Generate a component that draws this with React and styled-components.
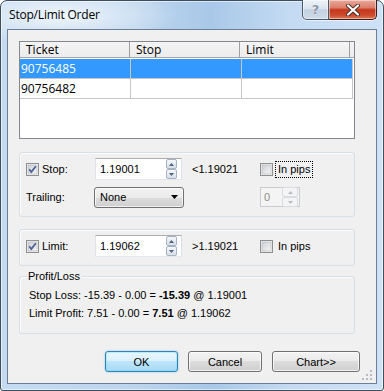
import React from 'react';
import styled, { createGlobalStyle } from 'styled-components';

const GlobalStyle = createGlobalStyle`
  html, body { margin: 0; padding: 0; background: #ffffff; }
  body {
    width: 384px;
    height: 391px;
    overflow: hidden;
    font-family: "Liberation Sans", Arial, sans-serif;
    font-size: 11px;
    color: #000;
  }
`;

const Window = styled.div`
  width: 384px;
  height: 391px;
  box-sizing: border-box;
  border: 1px solid #3f4d5c;
  border-radius: 7px 7px 3px 3px;
  padding: 0 6px 6px;
  display: flex;
  flex-direction: column;
  background:
    radial-gradient(ellipse 120px 30px at 60px 14px, rgba(255,255,255,0.75), rgba(255,255,255,0) 100%),
    linear-gradient(to right, #c4dbf2 0%, #bcd5ee 35%, #a9c8e8 55%, #c3daf2 75%, #cfe2f6 100%);
  box-shadow: inset 0 0 0 1px rgba(255,255,255,0.55);
`;

const TitleBar = styled.div`
  height: 28px;
  display: flex;
  align-items: flex-start;
`;

const Title = styled.div`
  flex: 1;
  margin: 6px 0 0 2px;
  font-family: "Open Sans", "Noto Sans", sans-serif;
  font-size: 12px;
  line-height: 16px;
  color: #000;
  letter-spacing: -0.2px;
`;

const CaptionButtons = styled.div`
  display: flex;
  margin-top: -1px;
  height: 20px;
  box-shadow: 0 1px 0 rgba(255,255,255,0.6);
  border-radius: 0 0 5px 5px;
`;

const CaptionButton = styled.div`
  height: 20px;
  box-sizing: border-box;
  display: flex;
  align-items: center;
  justify-content: center;
  border: 1px solid ${p => (p.$close ? '#3d1d19' : '#4d5a69')};
  border-top: none;
  border-radius: ${p => (p.$close ? '0 0 5px 0' : '0 0 0 5px')};
  width: ${p => (p.$close ? '48px' : '27px')};
  background: ${p =>
    p.$close
      ? 'linear-gradient(to bottom, #e9a99b 0%, #db7f6b 40%, #c5371c 52%, #cc4a2e 80%, #e07a55 100%)'
      : 'linear-gradient(to bottom, #eef3f8 0%, #dbe4ee 45%, #c3d1e0 52%, #cfdbe8 100%)'};
  box-shadow: inset 0 0 0 1px rgba(255,255,255,0.45);
  & + & { border-left: none; }
`;

const HelpGlyph = styled.span`
  font-family: "DejaVu Sans", sans-serif;
  font-weight: bold;
  font-size: 13px;
  color: #8a96a6;
  text-shadow: 0 0 1px #fff, 0 0 1px #fff;
  line-height: 1;
`;

const Client = styled.div`
  flex: 1;
  border: 1px solid #6b7f96;
  background: #f0f0f0;
  padding: 11px 16px 0 11px;
  display: flex;
  flex-direction: column;
  position: relative;
`;

const ListView = styled.div`
  height: 98px;
  margin-right: 5px;
  box-sizing: border-box;
  border: 1px solid #828790;
  background: #fff;
  font-family: "Open Sans", "Noto Sans", sans-serif;
  font-size: 12px;
`;

const HeaderRow = styled.div`
  display: flex;
  height: 16px;
  box-sizing: border-box;
  border-bottom: 1px solid #a5a5a5;
  background: linear-gradient(to bottom, #f4f4f4, #ececec);
`;

const HeaderCell = styled.div`
  width: 110px;
  border-right: 1px solid #a0a0a0;
  padding-left: 6px;
  box-sizing: border-box;
  line-height: 15px;
  white-space: nowrap;
`;

const Rows = styled.div`
  margin-top: 1px;
  display: flex;
  flex-direction: column;
`;

const Row = styled.div`
  display: flex;
  width: 333px;
  height: 20px;
  box-sizing: border-box;
  border-bottom: 1px solid #c6c6c6;
  background: ${p => (p.$selected ? '#3399ff' : '#fff')};
  color: ${p => (p.$selected ? '#fff' : '#000')};
`;

const Cell = styled.div`
  width: 111px;
  box-sizing: border-box;
  border-right: 1px solid #c6c6c6;
  padding-left: 1px;
  line-height: 19px;
`;

const Group = styled.div`
  margin-right: 5px;
  margin-top: ${p => p.$top}px;
  height: ${p => p.$height}px;
  box-sizing: border-box;
  border: 1px solid #d5dfe5;
  border-radius: 3px;
  box-shadow: inset 1px 1px 0 #fbfcfd;
  position: relative;
`;

const ControlGrid = styled.div`
  display: grid;
  grid-template-columns: 69px 97px 68px auto;
  grid-auto-rows: 22px;
  row-gap: ${p => p.$gap || 0}px;
  padding: ${p => p.$padTop}px 0 0 6px;
  align-items: center;
`;

const CheckLabel = styled.label`
  display: flex;
  align-items: center;
  gap: 3px;
`;

const FocusText = styled.span`
  outline: ${p => (p.$focus ? '1px dotted #000' : 'none')};
  outline-offset: 1px;
  line-height: 13px;
  padding: 0 1px;
  margin-left: 1px;
`;

const TextBox = styled.div`
  width: 87px;
  height: 22px;
  box-sizing: border-box;
  border: 1px solid #abadb3;
  border-left-color: #e2e3ea;
  border-right-color: #dbdfe6;
  border-bottom-color: #e3e9ef;
  background: #fff;
  display: flex;
  align-items: center;
  padding: 0 4px 0 4px;
`;

const TextValue = styled.span`
  flex: 1;
`;

const SpinBox = styled.div`
  display: flex;
  flex-direction: column;
  width: ${p => p.$width || 11}px;
`;

const SpinButton = styled.div`
  height: 10px;
  box-sizing: border-box;
  border: 1px solid ${p => (p.$disabled ? '#d9dde3' : '#a7b2c2')};
  border-radius: 2px;
  background: ${p =>
    p.$disabled
      ? '#f4f4f4'
      : 'linear-gradient(to bottom, #f6f8fa 0%, #e6ebf0 50%, #d8dfe7 100%)'};
  display: flex;
  align-items: center;
  justify-content: center;
`;

const Combo = styled.div`
  width: 90px;
  height: 21px;
  margin-left: -1px;
  box-sizing: border-box;
  border: 1px solid #707070;
  border-radius: 3px;
  background: linear-gradient(to bottom, #f2f2f2 0%, #ebebeb 50%, #dddddd 50%, #cfcfcf 100%);
  box-shadow: inset 0 0 0 1px rgba(255,255,255,0.7);
  display: flex;
  align-items: center;
  justify-content: space-between;
  padding: 0 5px 0 5px;
`;

const DisabledSpin = styled.div`
  width: 40px;
  height: 20px;
  box-sizing: border-box;
  border: 1px solid #c9cdd2;
  background: #f4f4f4;
  display: flex;
  align-items: center;
  padding: 0 1px 0 3px;
  color: #8d8d8d;
`;

const Legend = styled.span`
  position: absolute;
  top: -8px;
  left: 7px;
  padding: 0 2px 0 1px;
  background: #f0f0f0;
  line-height: 14px;
`;

const SummaryLines = styled.div`
  padding: 9px 0 0 9px;
  line-height: 18px;
`;

const ButtonRow = styled.div`
  margin-top: 17px;
  display: flex;
  justify-content: flex-end;
  gap: 10px;
`;

const PushButton = styled.div`
  width: ${p => p.$width}px;
  height: 21px;
  box-sizing: border-box;
  border: 1px solid ${p => (p.$default ? '#3c7fb1' : '#707070')};
  border-radius: 3px;
  background: ${p =>
    p.$default
      ? 'linear-gradient(to bottom, #eaf6fd 0%, #d9f0fc 50%, #bee6fd 50%, #a7d9f5 100%)'
      : 'linear-gradient(to bottom, #f2f2f2 0%, #ebebeb 50%, #dddddd 50%, #cfcfcf 100%)'};
  box-shadow: ${p =>
    p.$default
      ? 'inset 0 0 0 1px #48e0ff55, 0 0 2px #6fc8f2'
      : 'inset 0 0 0 1px rgba(255,255,255,0.75)'};
  display: flex;
  align-items: center;
  justify-content: center;
`;

const Gripper = styled.svg`
  position: absolute;
  right: 3px;
  bottom: 2px;
`;

const CheckBox = ({ checked }) => (
  <svg width="13" height="13" viewBox="0 0 13 13">
    <defs>
      <linearGradient id="cbg" x1="0" y1="0" x2="1" y2="1">
        <stop offset="0" stopColor="#cbcfd5" />
        <stop offset="1" stopColor="#f6f6f6" />
      </linearGradient>
    </defs>
    <rect x="0.5" y="0.5" width="12" height="12" fill="#f4f4f4" stroke="#8e8f8f" />
    <rect x="2" y="2" width="9" height="9" fill="url(#cbg)" stroke="#b4b6b9" strokeWidth="0.6" />
    {checked && (
      <path d="M3.2 6.3 L5.3 9 L9.8 3.3" fill="none" stroke="#4a5f97" strokeWidth="1.8" />
    )}
  </svg>
);

const Arrow = ({ up, color }) => (
  <svg width="5" height="3" viewBox="0 0 5 3">
    <path d={up ? 'M0 3 L2.5 0 L5 3 Z' : 'M0 0 L5 0 L2.5 3 Z'} fill={color} />
  </svg>
);

const Spinner = ({ disabled, width }) => (
  <SpinBox $width={width}>
    <SpinButton $disabled={disabled}><Arrow up color={disabled ? '#b9bdc2' : '#4e6380'} /></SpinButton>
    <SpinButton $disabled={disabled}><Arrow color={disabled ? '#b9bdc2' : '#4e6380'} /></SpinButton>
  </SpinBox>
);

const PriceInput = ({ value }) => (
  <TextBox>
    <TextValue>{value}</TextValue>
    <Spinner />
  </TextBox>
);

const orders = ['90756485', '90756482'];

export default function App() {
  return (
    <>
      <GlobalStyle />
      <Window>
        <TitleBar>
          <Title>Stop/Limit Order</Title>
          <CaptionButtons>
            <CaptionButton>
              <HelpGlyph>?</HelpGlyph>
            </CaptionButton>
            <CaptionButton $close>
              <svg width="14" height="12" viewBox="0 0 14 12">
                <path d="M2 1.5 L12 10.5 M12 1.5 L2 10.5" stroke="#4a2a26" strokeWidth="4" strokeLinecap="round" />
                <path d="M2 1.5 L12 10.5 M12 1.5 L2 10.5" stroke="#ffffff" strokeWidth="2.2" strokeLinecap="round" />
              </svg>
            </CaptionButton>
          </CaptionButtons>
        </TitleBar>

        <Client>
          <ListView>
            <HeaderRow>
              <HeaderCell>Ticket</HeaderCell>
              <HeaderCell>Stop</HeaderCell>
              <HeaderCell>Limit</HeaderCell>
            </HeaderRow>
            <Rows>
              {orders.map((t, i) => (
                <Row key={t} $selected={i === 0}>
                  <Cell>{t}</Cell>
                  <Cell />
                  <Cell />
                </Row>
              ))}
            </Rows>
          </ListView>

          <Group $top={13} $height={65}>
            <ControlGrid $padTop={5} $gap={6}>
              <CheckLabel><CheckBox checked />Stop:</CheckLabel>
              <PriceInput value="1.19001" />
              <span>&lt;1.19021</span>
              <CheckLabel><CheckBox /><FocusText $focus>In pips</FocusText></CheckLabel>

              <span>Trailing:</span>
              <Combo>
                <span>None</span>
                <svg width="7" height="4" viewBox="0 0 7 4"><path d="M0 0 L7 0 L3.5 4 Z" fill="#000" /></svg>
              </Combo>
              <span />
              <DisabledSpin>
                <TextValue>0</TextValue>
                <Spinner disabled width={16} />
              </DisabledSpin>
            </ControlGrid>
          </Group>

          <Group $top={12} $height={37}>
            <ControlGrid $padTop={5}>
              <CheckLabel><CheckBox checked />Limit:</CheckLabel>
              <PriceInput value="1.19062" />
              <span>&gt;1.19021</span>
              <CheckLabel><CheckBox /><FocusText>In pips</FocusText></CheckLabel>
            </ControlGrid>
          </Group>

          <Group $top={10} $height={58}>
            <Legend>Profit/Loss</Legend>
            <SummaryLines>
              <div>Stop Loss: -15.39 - 0.00 = <b>-15.39</b> @ 1.19001</div>
              <div>Limit Profit: 7.51 - 0.00 = <b>7.51</b> @ 1.19062</div>
            </SummaryLines>
          </Group>

          <ButtonRow>
            <PushButton $width={73} $default>OK</PushButton>
            <PushButton $width={74}>Cancel</PushButton>
            <PushButton $width={88}>Chart&gt;&gt;</PushButton>
          </ButtonRow>

          <Gripper width="11" height="11" viewBox="0 0 11 11">
            {[[8, 0], [8, 4], [4, 4], [8, 8], [4, 8], [0, 8]].map(([x, y]) => (
              <rect key={`${x}-${y}`} x={x} y={y} width="2" height="2" fill="#b8bcc2" />
            ))}
          </Gripper>
        </Client>
      </Window>
    </>
  );
}
